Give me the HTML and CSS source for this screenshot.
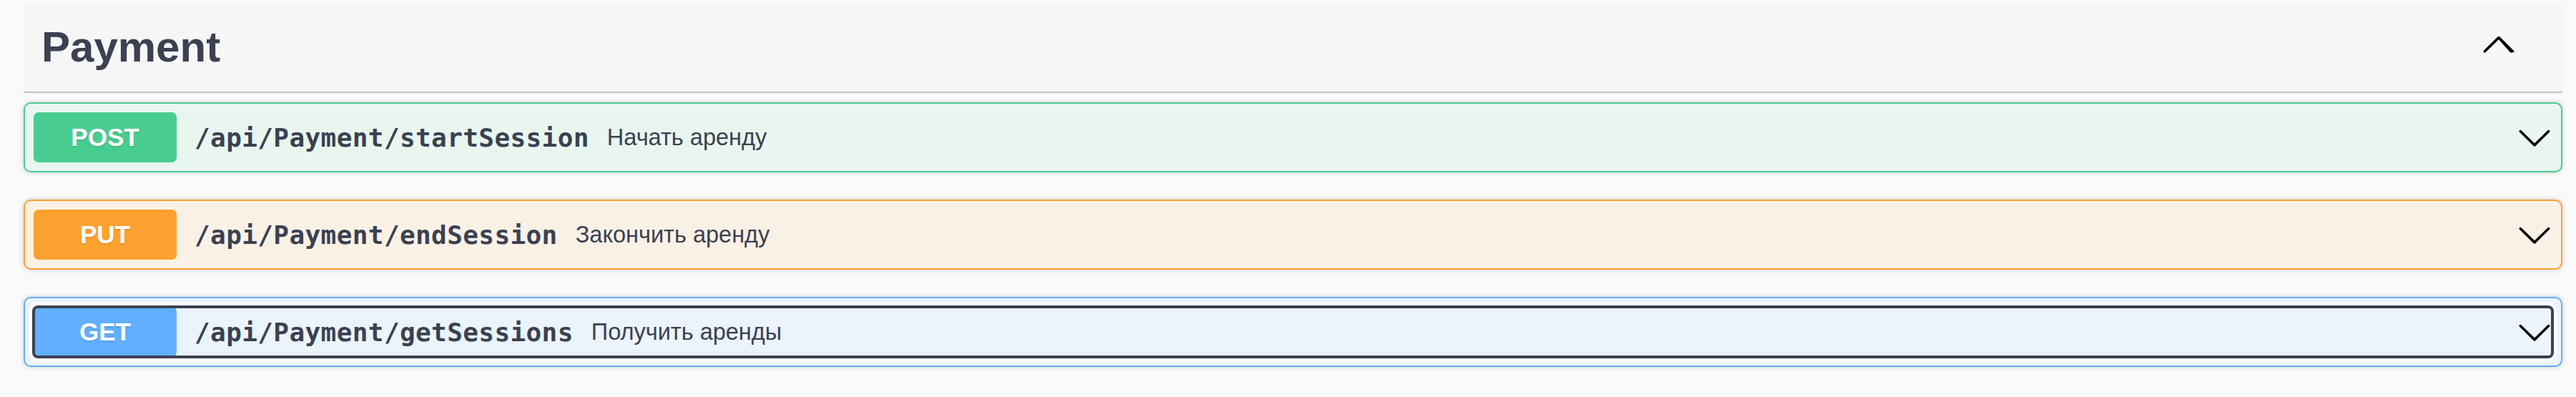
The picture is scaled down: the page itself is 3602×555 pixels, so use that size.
FILE: index.html
```html
<!DOCTYPE html>
<html lang="ru">
<head>
<meta charset="utf-8">
<title>Payment</title>
<link rel="stylesheet" href="styles.css">
</head>
<body>
<section class="tag-section">
  <h3 class="tag">
    <span class="tag-name">Payment</span>
    <button class="expand" type="button" aria-expanded="true">
      <svg class="arrow-up" viewBox="0 0 20 20" aria-hidden="true"><path d="M17.418 14.908c-.272.268-.709.268-.979 0L10 7.717 2.561 14.908c-.27.268-.707.268-.979 0-.27-.268-.27-.701 0-.969l7.908-7.83c.27-.268.707-.268.979 0l7.908 7.83c.27.268.27.701 0 .969z"/></svg>
    </button>
  </h3>
  <div class="ops">
    <div class="opblock post">
      <button class="summary" type="button">
        <span class="method">POST</span>
        <span class="path">/api/Payment/startSession</span>
        <span class="desc">Начать аренду</span>
        <svg class="arrow-down" viewBox="0 0 20 20" aria-hidden="true"><path d="M17.418 6.109c.272-.268.709-.268.979 0s.271.701 0 .969l-7.908 7.83c-.27.268-.707.268-.979 0l-7.908-7.830c-.27-.268-.27-.701 0-.969.271-.268.709-.268.979 0L10 13.25l7.418-7.141z"/></svg>
      </button>
    </div>
    <div class="opblock put">
      <button class="summary" type="button">
        <span class="method">PUT</span>
        <span class="path">/api/Payment/endSession</span>
        <span class="desc">Закончить аренду</span>
        <svg class="arrow-down" viewBox="0 0 20 20" aria-hidden="true"><path d="M17.418 6.109c.272-.268.709-.268.979 0s.271.701 0 .969l-7.908 7.83c-.27.268-.707.268-.979 0l-7.908-7.83c-.27-.268-.27-.701 0-.969.271-.268.709-.268.979 0L10 13.25l7.418-7.141z"/></svg>
      </button>
    </div>
    <div class="opblock get">
      <button class="summary focused" type="button">
        <span class="method">GET</span>
        <span class="path">/api/Payment/getSessions</span>
        <span class="desc">Получить аренды</span>
        <svg class="arrow-down" viewBox="0 0 20 20" aria-hidden="true"><path d="M17.418 6.109c.272-.268.709-.268.979 0s.271.701 0 .969l-7.908 7.83c-.27.268-.707.268-.979 0l-7.908-7.83c-.27-.268-.27-.701 0-.969.271-.268.709-.268.979 0L10 13.25l7.418-7.141z"/></svg>
      </button>
    </div>
  </div>
</section>
</body>
</html>
```

FILE: styles.css
```css
* { box-sizing: border-box; }

html, body { height: 100%; }

body {
  margin: 0;
  padding: 4px 19px 0 33px;
  background: #fafafa;
  color: #3b4151;
  font-family: "Liberation Sans", Arial, sans-serif;
}

.tag {
  display: flex;
  align-items: center;
  height: 126px;
  margin: 0 0 13px;
  padding: 0 64px 0 25px;
  background: #f6f6f6;
  border-bottom: 2px solid #c1c3c7;
  font-size: 60px;
  font-weight: 700;
  line-height: 1;
}

.tag-name { flex: 1; }

.expand {
  display: flex;
  padding: 0;
  margin: 0 0 10px;
  border: 0;
  background: transparent;
  cursor: pointer;
}

.arrow-up, .arrow-down {
  width: 50px;
  height: 50px;
  flex: none;
  fill: #000;
}

.opblock {
  border: 2px solid;
  border-radius: 10px;
  box-shadow: 0 0 7px rgba(0, 0, 0, .19);
  margin-bottom: 38px;
  padding: 12px;
}

.post { border-color: #49cc90; background: #e8f6ef; }
.put { border-color: #fca130; background: #faf1e6; }
.get { border-color: #61affe; background: #ebf3fb; }

.post .method { background: #49cc90; }
.put .method { background: #fca130; }
.get .method { background: #61affe; }

.summary {
  display: flex;
  align-items: center;
  width: 100%;
  height: 70px;
  padding: 0;
  border: 0;
  border-radius: 6px;
  background: transparent;
  color: inherit;
  font: inherit;
  text-align: left;
  cursor: pointer;
}

.summary.focused {
  outline: 4px solid #3b4151;
  outline-offset: -2px;
  box-shadow: 0 0 0 6px #fff;
}

.method {
  flex: none;
  display: flex;
  align-items: center;
  justify-content: center;
  width: 200px;
  height: 70px;
  border-radius: 7px;
  color: #fff;
  font-size: 35px;
  font-weight: 700;
  text-shadow: 0 2px 0 rgba(0, 0, 0, .1);
}

.path {
  flex: none;
  padding: 0 25px;
  font-family: "DejaVu Sans Mono", monospace;
  font-size: 36px;
  font-weight: 700;
  letter-spacing: 0.4px;
  color: #3b4151;
}

.desc {
  flex: 1;
  font-size: 32.5px;
  color: #3b4151;
}
```
